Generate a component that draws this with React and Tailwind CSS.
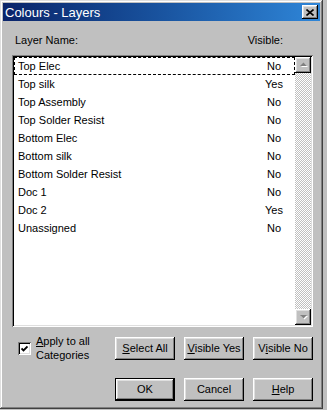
import React from "react";

const layers = [
  { name: "Top Elec", visible: "No" },
  { name: "Top silk", visible: "Yes" },
  { name: "Top Assembly", visible: "No" },
  { name: "Top Solder Resist", visible: "No" },
  { name: "Bottom Elec", visible: "No" },
  { name: "Bottom silk", visible: "No" },
  { name: "Bottom Solder Resist", visible: "No" },
  { name: "Doc 1", visible: "No" },
  { name: "Doc 2", visible: "Yes" },
  { name: "Unassigned", visible: "No" },
];

const raised =
  "bg-[#c0c0c0] shadow-[inset_-1px_-1px_#000,inset_1px_1px_#fff,inset_-2px_-2px_#808080,inset_2px_2px_#dfdfdf]";

function Button({ children, isDefault }) {
  if (isDefault) {
    return (
      <div className="h-[23px] w-[60px] border border-black">
        <div className={`flex h-full w-full items-center justify-center ${raised}`}>
          {children}
        </div>
      </div>
    );
  }
  return (
    <div className={`flex h-[23px] w-[60px] items-center justify-center ${raised}`}>
      {children}
    </div>
  );
}

function ArrowButton({ down }) {
  return (
    <div className={`flex h-[16px] w-[16px] items-center justify-center ${raised}`}>
      <svg width="9" height="6" viewBox="0 0 9 6">
        {down ? (
          <>
            <polygon points="2,2 9,2 5.5,5.5" fill="#fff" />
            <polygon points="1,1 8,1 4.5,4.5" fill="#808080" />
          </>
        ) : (
          <>
            <polygon points="5.5,1.5 9,5 2,5" fill="#fff" />
            <polygon points="4.5,0.5 8,4 1,4" fill="#808080" />
          </>
        )}
      </svg>
    </div>
  );
}

export default function App() {
  return (
    <div className="h-[410px] w-[327px] bg-[#c0c0c0] text-[11px] text-black [font-family:'Liberation_Sans',Arial,sans-serif]">
      <div className="flex h-[409px] w-[323px] flex-col bg-[#c0c0c0] p-[3px] shadow-[inset_-1px_-1px_#404040,inset_1px_1px_#dfdfdf,inset_-2px_-2px_#808080,inset_2px_2px_#fff]">
        {/* title bar */}
        <div className="flex h-[18px] items-center justify-between bg-gradient-to-r from-[#0a246a] to-[#2f86d8] pl-[2px] pr-[2px]">
          <span className="text-[13px] leading-none text-white">Colours - Layers</span>
          <div className={`flex h-[14px] w-[16px] items-center justify-center ${raised}`}>
            <svg width="8" height="7" viewBox="0 0 8 7">
              <path d="M0.5 0.5 L7.5 6.5 M7.5 0.5 L0.5 6.5" stroke="#000" strokeWidth="1.6" />
            </svg>
          </div>
        </div>

        <div className="flex w-[310px] flex-col pl-[9px]">
          <div className="mt-[12px] flex h-[14px] items-center">
            <span className="pl-[3px]">Layer Name:</span>
            <span className="ml-auto mr-[30px]">Visible:</span>
          </div>

          {/* list box */}
          <div className="mt-[8px] flex h-[272px] w-[301px] bg-white p-[2px] shadow-[inset_1px_1px_#808080,inset_-1px_-1px_#fff,inset_2px_2px_#000,inset_-2px_-2px_#dfdfdf]">
            <div className="flex flex-1 flex-col">
              {layers.map((l, i) => (
                <div
                  key={l.name}
                  className={`flex h-[18px] items-center ${
                    i === 0 ? "border border-dashed border-black" : "border border-transparent"
                  }`}
                >
                  <span className="pl-[3px]">{l.name}</span>
                  <span className="ml-auto w-[40px] text-center">{l.visible}</span>
                </div>
              ))}
            </div>
            <div className="flex w-[16px] flex-col">
              <ArrowButton />
              <div className="flex-1 bg-[repeating-conic-gradient(#c0c0c0_0_25%,#fff_0_50%)] bg-[length:2px_2px]" />
              <ArrowButton down />
            </div>
          </div>

          {/* options row */}
          <div className="mt-[9px] flex h-[24px] items-center">
            <div className="flex items-center pl-[6px]">
              <div className="flex h-[13px] w-[13px] items-center justify-center bg-white shadow-[inset_1px_1px_#808080,inset_-1px_-1px_#fff,inset_2px_2px_#000,inset_-2px_-2px_#dfdfdf]">
                <svg width="7" height="7" viewBox="0 0 7 7">
                  <path d="M0.5 3.5 L2.5 5.5 L6.5 1.5" stroke="#000" strokeWidth="1.8" fill="none" />
                </svg>
              </div>
              <div className="ml-[5px] flex flex-col leading-[14px]">
                <span>
                  <span className="underline">A</span>pply to all
                </span>
                <span>Categories</span>
              </div>
            </div>
            <div className="ml-auto flex gap-[9px]">
              <Button>
                <span className="underline">S</span>elect All
              </Button>
              <Button>
                <span className="underline">V</span>isible Yes
              </Button>
              <Button>
                V<span className="underline">i</span>sible No
              </Button>
            </div>
          </div>

          <div className="mt-[18px] flex justify-end gap-[9px]">
            <Button isDefault>OK</Button>
            <Button>Cancel</Button>
            <Button>
              <span className="underline">H</span>elp
            </Button>
          </div>
        </div>
      </div>
    </div>
  );
}
